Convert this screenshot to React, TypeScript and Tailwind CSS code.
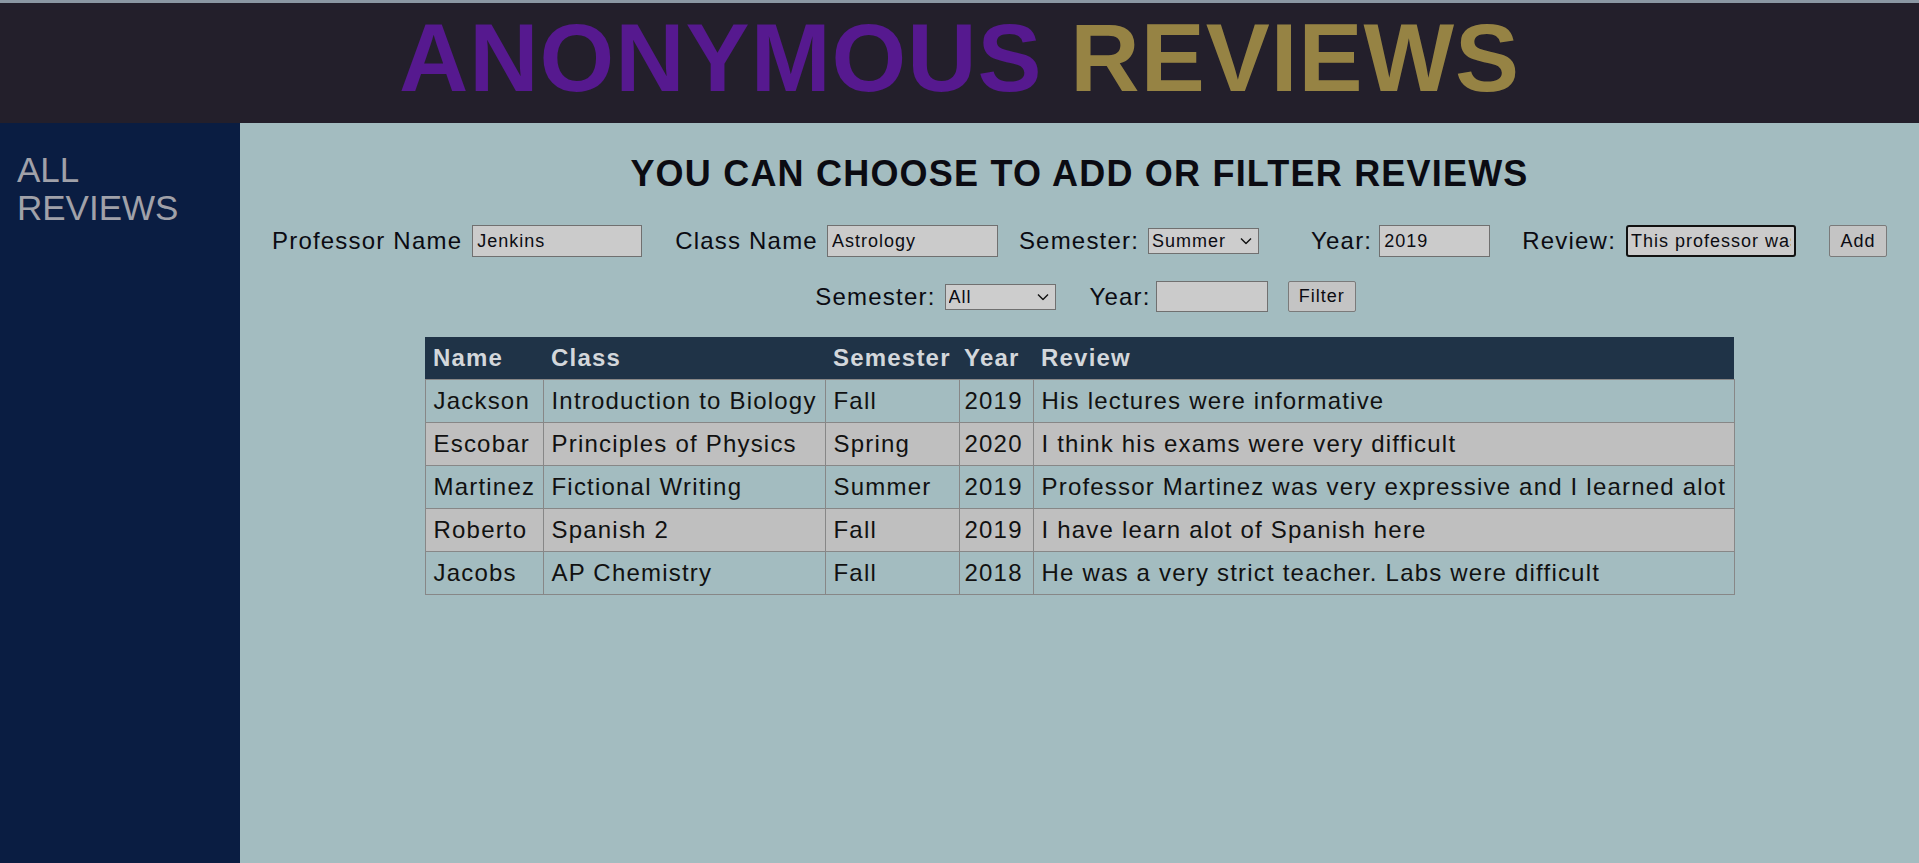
import { useState } from "react"

type Review = {
    name: string
    className: string
    semester: string
    year: string
    review: string
}

const reviews: Review[] = [
    { name: "Jackson", className: "Introduction to Biology", semester: "Fall", year: "2019", review: "His lectures were informative" },
    { name: "Escobar", className: "Principles of Physics", semester: "Spring", year: "2020", review: "I think his exams were very difficult" },
    { name: "Martinez", className: "Fictional Writing", semester: "Summer", year: "2019", review: "Professor Martinez was very expressive and I learned alot" },
    { name: "Roberto", className: "Spanish 2", semester: "Fall", year: "2019", review: "I have learn alot of Spanish here" },
    { name: "Jacobs", className: "AP Chemistry", semester: "Fall", year: "2018", review: "He was a very strict teacher. Labs were difficult" },
]

// // small select with its own chevron so it looks the same everywhere
const Select = ({ value, options, className }: { value: string, options: string[], className: string }) => {
    const [val, setVal] = useState(value)
    return (
        <div className={`relative flex ${className}`}>
            <select
                value={val}
                onChange={(e) => setVal(e.target.value)}
                className="block appearance-none w-full h-full bg-[#cdcdcd] border border-[#707070] py-0 pl-[3px] pr-[20px] text-[18px] leading-[24px] tracking-[1px] outline-none"
            >
                {options.map((o) => <option key={o}>{o}</option>)}
            </select>
            <svg className="absolute right-[7px] top-1/2 -translate-y-1/2 pointer-events-none" width="12" height="7" viewBox="0 0 12 7">
                <path d="M1 1 L6 6 L11 1" fill="none" stroke="#111" strokeWidth="1.4" />
            </svg>
        </div>
    )
}

const inputCls = "h-full bg-[#cbcbcb] border border-[#707070] px-[4px] text-[18px] tracking-[1px] outline-none"
const btnCls = "h-full bg-[#c4c4c4] border border-[#7a7a7a] px-[10px] text-[18px] tracking-[1px] rounded-[2px]"

export default function App() {

    return (
        <div className="min-h-screen flex flex-col font-['Liberation_Sans',Arial,sans-serif] tracking-[1.2px]">

            <div className="h-[3px] bg-[#8b97a3]"></div>

            <header className="h-[120px] bg-[#231f2b] text-center">
                <h1 className="text-[96px] font-bold leading-[110px] tracking-[1px]">
                    <span className="text-[#56198f]">ANONYMOUS</span>{" "}
                    <span className="text-[#968344]">REVIEWS</span>
                </h1>
            </header>

            <div className="flex flex-1">

                <aside className="w-[240px] shrink-0 bg-[#0a1d42] pl-[17px] pr-4 pt-[28px] text-[35px] leading-[38px] tracking-normal text-[#a0a1a9]">
                    ALL REVIEWS
                </aside>

                <main className="flex-1 bg-[#a3bcc0] text-[#0b0b12]">

                    <h2 className="mt-[30px] text-center text-[36px] font-bold leading-[41px]">
                        YOU CAN CHOOSE TO ADD OR FILTER REVIEWS
                    </h2>

                    {/* add review row */}
                    <div className="mt-[31px] flex justify-center items-center h-[32px] text-[24px]">
                        <span>Professor Name</span>
                        <input defaultValue="Jenkins" className={`${inputCls} ml-[10px] w-[170px]`} />

                        <span className="ml-[33px]">Class Name</span>
                        <input defaultValue="Astrology" className={`${inputCls} ml-[9px] w-[171px]`} />

                        <span className="ml-[21px]">Semester:</span>
                        <Select value="Summer" options={["Fall", "Spring", "Summer"]} className="ml-[9px] w-[111px] h-[26px]" />

                        <span className="ml-[52px]">Year:</span>
                        <input defaultValue="2019" className={`${inputCls} ml-[7px] w-[111px]`} />

                        <span className="ml-[32px]">Review:</span>
                        <input
                            defaultValue="This professor was great"
                            className="h-full ml-[10px] w-[170px] bg-[#cbcbcb] border-2 border-[#111] rounded-[3px] px-[3px] text-[18px] tracking-[1px] outline-none"
                        />

                        <button className={`${btnCls} ml-[33px] w-[58px]`}>Add</button>
                    </div>

                    {/* filter row */}
                    <div className="mt-[24px] flex justify-center items-center h-[31px] pl-[12px] text-[24px]">
                        <span>Semester:</span>
                        <Select value="All" options={["All", "Fall", "Spring", "Summer"]} className="ml-[9px] w-[111px] h-[26px]" />

                        <span className="ml-[34px]">Year:</span>
                        <input className={`${inputCls} ml-[5px] w-[112px]`} />

                        <button className={`${btnCls} ml-[20px] w-[68px]`}>Filter</button>
                    </div>

                    <table className="mx-auto mt-[25px] w-[1309px] table-fixed border-collapse text-[24px] text-[#111]">
                        <colgroup>
                            <col className="w-[118px]" />
                            <col className="w-[282px]" />
                            <col className="w-[134px]" />
                            <col className="w-[74px]" />
                            <col className="w-[701px]" />
                        </colgroup>
                        <thead>
                            <tr className="bg-[#1f3347] text-[#d3d7db]">
                                <th className="h-[42px] px-[8px] text-left font-bold">Name</th>
                                <th className="h-[42px] px-[8px] text-left font-bold">Class</th>
                                <th className="h-[42px] px-[8px] text-left font-bold">Semester</th>
                                <th className="h-[42px] px-[5px] text-left font-bold">Year</th>
                                <th className="h-[42px] px-[8px] text-left font-bold">Review</th>
                            </tr>
                        </thead>
                        <tbody>
                            {
                                reviews.map((r, i) => {
                                    return (
                                        <tr key={i} className={i % 2 === 0 ? "bg-[#a3bcc0]" : "bg-[#bfbfbf]"}>
                                            <td className="h-[43px] px-[8px] border border-[#878787] whitespace-nowrap">{r.name}</td>
                                            <td className="h-[43px] px-[8px] border border-[#878787] whitespace-nowrap">{r.className}</td>
                                            <td className="h-[43px] px-[8px] border border-[#878787] whitespace-nowrap">{r.semester}</td>
                                            <td className="h-[43px] px-[5px] border border-[#878787] whitespace-nowrap">{r.year}</td>
                                            <td className="h-[43px] px-[8px] border border-[#878787] whitespace-nowrap">{r.review}</td>
                                        </tr>
                                    )
                                })
                            }
                        </tbody>
                    </table>

                </main>
            </div>
        </div>
    )
}
